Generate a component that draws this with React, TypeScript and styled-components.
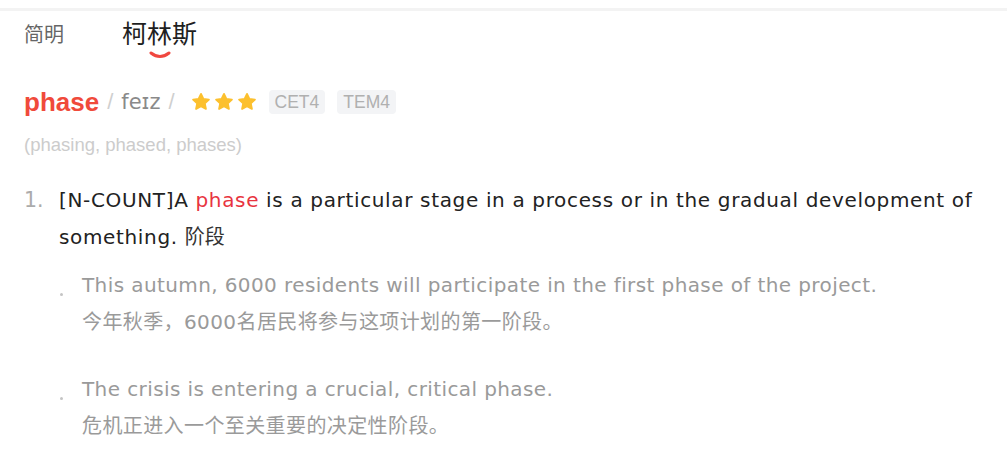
import { FC } from 'react';
import styled, { createGlobalStyle } from 'styled-components';

const GlobalStyle = createGlobalStyle`
  html, body {
    margin: 0;
    padding: 0;
    background: #fff;
  }
  body {
    font-family: "DejaVu Sans", "Noto Sans CJK SC", sans-serif;
  }
`;

const Page = styled.div`
  width: 1007px;
  height: 462px;
  overflow: hidden;
`;

const TopEdge = styled.div`
  height: 8px;
  border-bottom: 3px solid #f3f3f3;
`;

const Tabs = styled.div`
  display: flex;
  align-items: flex-start;
  gap: 58px;
  padding: 6px 0 0 24px;
  height: 49px;
  box-sizing: border-box;
`;

const Tab = styled.div<{ $active?: boolean }>`
  position: relative;
  font-family: "Noto Sans CJK SC", sans-serif;
  font-size: ${(p) => (p.$active ? '25px' : '20px')};
  line-height: 30px;
  color: ${(p) => (p.$active ? '#1f1f1f' : '#666')};
  margin-top: ${(p) => (p.$active ? '0' : '2px')};
`;

const Smile = styled.svg`
  position: absolute;
  left: 50%;
  top: 34px;
  transform: translateX(-50%);
`;

const Entry = styled.div`
  padding: 0 24px;
`;

const HeadRow = styled.div`
  display: flex;
  align-items: center;
  height: 40px;
  margin-top: 22px;
`;

const Word = styled.span`
  font-family: "Liberation Sans", "Noto Sans", sans-serif;
  font-weight: 700;
  font-size: 26px;
  color: #f04a3b;
`;

const Slash = styled.span`
  font-family: "Liberation Sans", sans-serif;
  font-size: 22px;
  color: #cfcfcf;
  margin: 0 8px;
`;

const Phonetic = styled.span`
  font-family: "DejaVu Sans", sans-serif;
  font-size: 21px;
  color: #8a8a8a;
`;

const Stars = styled.div`
  display: flex;
  gap: 3px;
  margin: 0 12px 0 8px;
`;

const Tag = styled.span`
  font-family: "Liberation Sans", sans-serif;
  font-size: 17.5px;
  line-height: 24px;
  color: #b0b0b0;
  background: #f3f4f6;
  border-radius: 4px;
  padding: 0 6px;
  margin-right: 12px;
`;

const Forms = styled.div`
  font-family: "Liberation Sans", sans-serif;
  font-size: 18.5px;
  color: #cccccc;
  margin-top: 12px;
  line-height: 22px;
`;

const Sense = styled.div`
  display: flex;
  margin-top: 26px;
`;

const SenseNum = styled.div`
  width: 35px;
  flex: none;
  font-size: 20.5px;
  line-height: 37px;
  color: #ababab;
`;

const SenseBody = styled.div`
  flex: 1;
`;

const Definition = styled.div`
  font-size: 20px;
  line-height: 37px;
  letter-spacing: 0.65px;
  color: #222;
`;

const Hl = styled.span`
  color: #e8343f;
`;

const Cn = styled.span`
  font-family: "Noto Sans CJK SC", sans-serif;
  font-size: 20px;
  line-height: 1;
  letter-spacing: 0;
  color: #333;
`;

const Examples = styled.div`
  display: flex;
  flex-direction: column;
  gap: 31px;
  margin-top: 11px;
`;

const Example = styled.div`
  display: flex;
`;

const Dot = styled.div`
  width: 23px;
  flex: none;
  position: relative;
  &::before {
    content: '';
    position: absolute;
    left: 1px;
    top: 26px;
    width: 3px;
    height: 3px;
    border-radius: 50%;
    background: #c4c4c4;
  }
`;

const ExEn = styled.div`
  font-size: 20px;
  line-height: 37px;
  letter-spacing: 0.4px;
  color: #9a9a9a;
`;

const ExCn = styled.div`
  font-family: "DejaVu Sans", "Noto Sans CJK SC", sans-serif;
  font-size: 20px;
  line-height: 36px;
  letter-spacing: 0.4px;
  color: #9a9a9a;
`;

const Star: FC = () => (
  <svg width="20" height="20" viewBox="0 0 24 24">
    <path
      d="M12 2.2l2.9 6.1 6.6.8-4.9 4.6 1.3 6.6L12 17l-5.9 3.3 1.3-6.6L2.5 9.1l6.6-.8z"
      fill="#fcc02e"
      stroke="#fcc02e"
      strokeWidth="2.2"
      strokeLinejoin="round"
    />
  </svg>
);

const examples = [
  {
    en: 'This autumn, 6000 residents will participate in the first phase of the project.',
    cn: '今年秋季，6000名居民将参与这项计划的第一阶段。',
  },
  {
    en: 'The crisis is entering a crucial, critical phase.',
    cn: '危机正进入一个至关重要的决定性阶段。',
  },
];

const App: FC = () => (
  <Page>
    <GlobalStyle />
    <TopEdge />
    <Tabs>
      <Tab>简明</Tab>
      <Tab $active>
        柯林斯
        <Smile width="22" height="8" viewBox="0 0 22 8">
          <path d="M2 2 Q11 9 20 2" fill="none" stroke="#f0473f" strokeWidth="3" strokeLinecap="round" />
        </Smile>
      </Tab>
    </Tabs>
    <Entry>
      <HeadRow>
        <Word>phase</Word>
        <Slash>/</Slash>
        <Phonetic>feɪz</Phonetic>
        <Slash>/</Slash>
        <Stars>
          <Star />
          <Star />
          <Star />
        </Stars>
        <Tag>CET4</Tag>
        <Tag>TEM4</Tag>
      </HeadRow>
      <Forms>(phasing, phased, phases)</Forms>
      <Sense>
        <SenseNum>1.</SenseNum>
        <SenseBody>
          <Definition>
            [N-COUNT]A <Hl>phase</Hl> is a particular stage in a process or in the gradual development of
            something. <Cn>阶段</Cn>
          </Definition>
          <Examples>
            {examples.map((ex) => (
              <Example key={ex.en}>
                <Dot />
                <div>
                  <ExEn>{ex.en}</ExEn>
                  <ExCn>{ex.cn}</ExCn>
                </div>
              </Example>
            ))}
          </Examples>
        </SenseBody>
      </Sense>
    </Entry>
  </Page>
);

export default App;
